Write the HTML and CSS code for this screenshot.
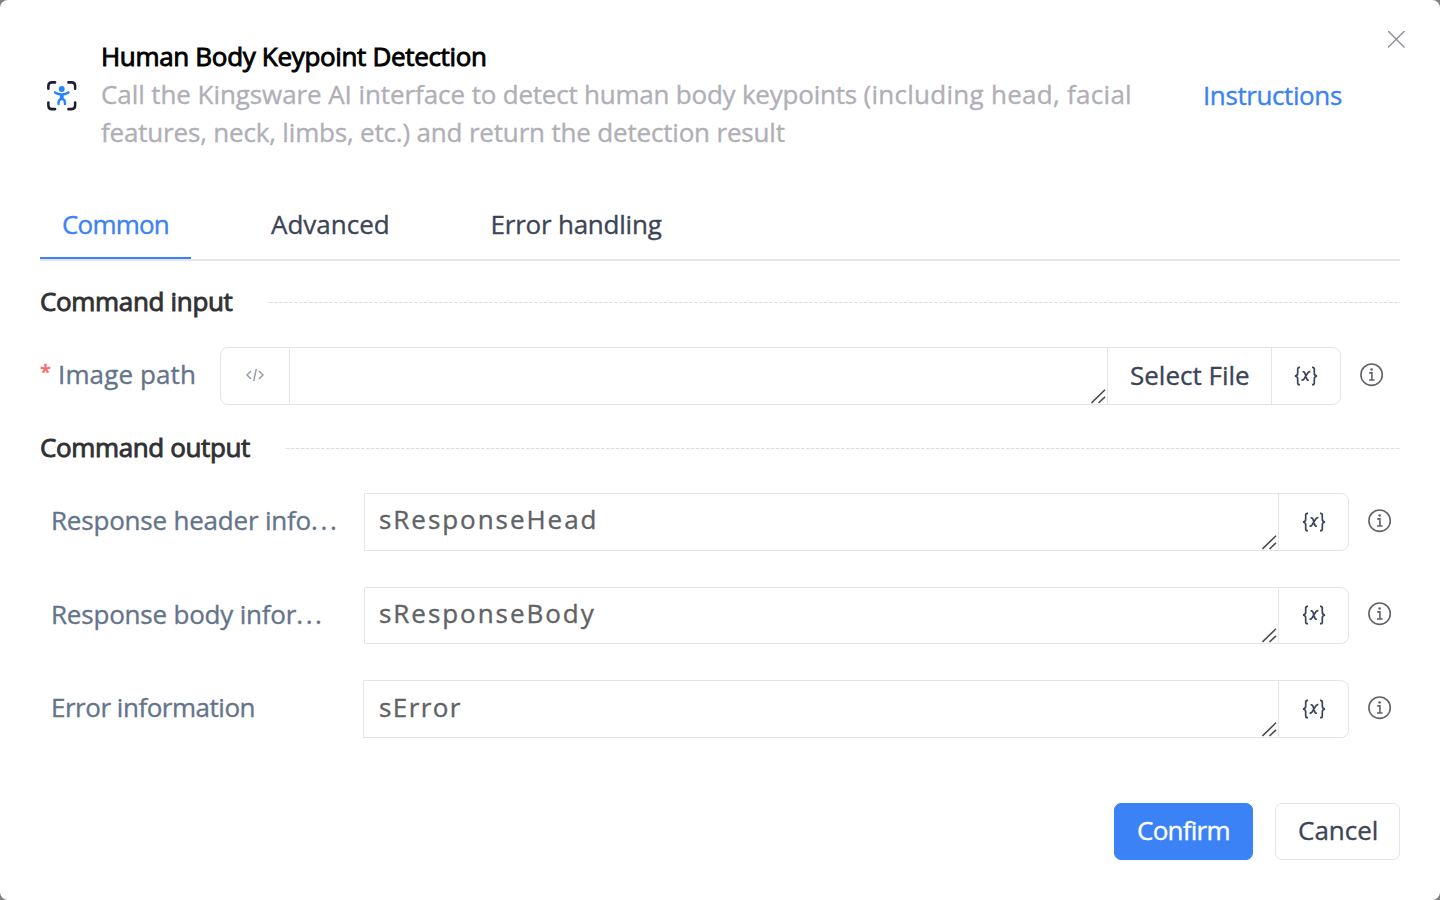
FILE: index.html
```html
<!DOCTYPE html>
<html lang="en">
<head>
<meta charset="utf-8">
<title>Human Body Keypoint Detection</title>
<link rel="stylesheet" href="styles.css">
</head>
<body>
<svg width="0" height="0" class="defs">
  <symbol id="info" viewBox="0 0 24 24"><g fill="none" stroke="#606266" stroke-width="1.6"><circle cx="11.6" cy="11.7" r="10.7"/><path d="M9.2 9.9h2.7v7M9 17h5.6"/></g><circle cx="11.6" cy="6.5" r="1.3" fill="#606266"/></symbol>
  <symbol id="var" viewBox="0 0 24 20"><g fill="none" stroke="#3b4557" stroke-width="1.7"><path d="M6 1.3H5.4Q3.7 1.3 3.7 3v4.2Q3.7 9.6 1 10q2.7.4 2.7 2.8V17q0 1.7 1.7 1.7H6"/><path d="M18 1.3h.6q1.7 0 1.7 1.7v4.2q0 2.4 2.7 2.8-2.7.4-2.7 2.8V17q0 1.7-1.7 1.7H18"/><path d="M8.6 6q1.7-.6 2.3 1l1.9 6q.5 1.5 2 .9M16.4 5.7q-1.5-.3-2.5 1.1L10 12.9q-1 1.4-2.5 1.1"/></g></symbol>
  <symbol id="grip" viewBox="0 0 15 15"><path d="M.5 14 14 .8M7.5 14 14 7.8" fill="none" stroke="#4c4c4c" stroke-width="1.6"/></symbol>
</svg>
<main class="dialog">
  <header class="header">
    <svg class="logo" viewBox="0 0 30 30"><g fill="none" stroke="#1f1f33" stroke-width="2.6" stroke-linecap="round"><path d="M1.4 7.8V5q0-3.6 3.6-3.6h3.2M21.8 1.4H25q3.6 0 3.6 3.6v2.8M28.6 21.8V25q0 3.6-3.6 3.6h-3.2M8.2 28.6H5q-3.6 0-3.6-3.6v-3.2"/></g><circle cx="15" cy="8.2" r="3" fill="#2b84ff"/><g fill="none" stroke="#2b84ff" stroke-width="2.5" stroke-linecap="round" stroke-linejoin="round"><path d="M8.2 11.6q3 2 6.8 2t6.8-2M15 14v3.8M11.7 23.4q-.2-5.2 3.3-5.2t3.3 5.2"/></g><path d="M13 13.6h4v5h-4z" fill="#2b84ff"/></svg>
    <div class="heading">
      <h1 class="title">Human Body Keypoint Detection</h1>
      <p class="desc"><span class="desc-a">Call the Kingsware AI interface </span><span class="desc-mid">to detect human body keypoints </span><span class="desc-end">(including head, facial</span><br><span class="desc-b">features, neck, limbs, etc.) and return the detection result</span></p>
    </div>
    <a class="link">Instructions</a>
    <svg class="close" viewBox="0 0 19 19"><path d="M.5.5l17 17M17.5.5l-17 17" stroke="#8f9299" stroke-width="1.5"/></svg>
  </header>
  <nav class="tabs">
    <div class="tab active"><span class="t-common">Common</span></div>
    <div class="tab second"><span class="t-adv">Advanced</span></div>
    <div class="tab third"><span class="t-err">Error handling</span></div>
  </nav>
  <section class="section">
    <h2 class="section-head"><span class="s-in">Command input</span><i class="rule"></i></h2>
    <div class="row input-row">
      <label class="label required"><b class="star">*</b><span class="l-path">Image path</span></label>
      <div class="field rounded">
        <div class="code"><svg width="18" height="14" viewBox="0 0 18 14"><path d="M5 3 1 7l4 4M13 3l4 4-4 4M10.3.8 7.7 13.2" fill="none" stroke="#9298a3" stroke-width="1.4"/></svg></div>
        <div class="area"><svg class="grip"><use href="#grip"/></svg></div>
        <div class="select"><span class="l-select">Select File</span></div>
        <div class="var"><svg><use href="#var"/></svg></div>
      </div>
      <svg class="info"><use href="#info"/></svg>
    </div>
  </section>
  <section class="section output">
    <h2 class="section-head"><span class="s-out">Command output</span><i class="rule"></i></h2>
    <div class="row out-row">
      <label class="label wide"><span class="l-head">Response header info<span class="dots">...</span></span></label>
      <div class="field"><div class="area"><span class="v-head">sResponseHead</span><svg class="grip"><use href="#grip"/></svg></div><div class="var"><svg><use href="#var"/></svg></div></div>
      <svg class="info"><use href="#info"/></svg>
    </div>
    <div class="row out-row body-row">
      <label class="label wide"><span class="l-body">Response body infor<span class="dots">...</span></span></label>
      <div class="field"><div class="area"><span class="v-body">sResponseBody</span><svg class="grip"><use href="#grip"/></svg></div><div class="var"><svg><use href="#var"/></svg></div></div>
      <svg class="info"><use href="#info"/></svg>
    </div>
    <div class="row out-row error-row">
      <label class="label wide"><span class="l-error">Error information</span></label>
      <div class="field"><div class="area"><span class="v-error">sError</span><svg class="grip"><use href="#grip"/></svg></div><div class="var"><svg><use href="#var"/></svg></div></div>
      <svg class="info"><use href="#info"/></svg>
    </div>
  </section>
  <footer class="footer">
    <button class="btn primary"><span class="b-ok">Confirm</span></button>
    <button class="btn"><span class="b-cancel">Cancel</span></button>
  </footer>
</main>
</body>
</html>
```
FILE: styles.css
```css
* { box-sizing: border-box; }
body { margin: 0; background: #7f7f7f; font: 26px/38px "Open Sans", "Noto Sans", sans-serif; color: #3b4557; -webkit-text-stroke: 0.35px currentColor; }
.defs { position: absolute; }
.dialog { width: 1440px; height: 900px; background: #fff; border-radius: 8px; padding: 37px 40px 40px; display: flex; flex-direction: column; overflow: hidden; white-space: nowrap; }
.header { position: relative; display: flex; height: 152px; flex: none; }
.logo { width: 29.5px; height: 29.5px; margin: 44px 24.5px 0 7px; flex: none; }
.heading { width: 1102px; }
h1, h2, p { margin: 0; font-size: 26px; font-weight: 400; }
.title { color: #000; letter-spacing: -0.33px; }
.title, .s-in, .s-out { -webkit-text-stroke: 0.9px currentColor; }
.desc { color: #b0afb7; }
.desc-a { letter-spacing: -0.08px; }
.desc-mid { letter-spacing: -0.22px; }
.desc-end { letter-spacing: 0.28px; }
.desc-b { letter-spacing: -0.18px; }
.link { color: #3b82f6; margin-top: 39px; letter-spacing: -0.4px; }
.close { position: absolute; width: 19px; height: 19px; right: -6px; top: -7px; padding: 0.5px 0 0 0.5px; }
.tabs { display: flex; height: 72px; border-bottom: 2px solid #e4e5ea; flex: none; }
.tab { padding: 16px 22px 0; height: 70px; }
.active { width: 151px; color: #3b82f6; border-bottom: 2px solid #3b82f6; }
.second { margin-left: 58px; width: 220px; }
.third { padding-left: 21.5px; }
.t-common { letter-spacing: -0.8px; }
.t-err { letter-spacing: -0.22px; }
.section { padding-top: 22px; }
.section-head { display: flex; align-items: center; height: 38px; color: #303133; }
.s-in, .s-out { margin-top: -2px; letter-spacing: -0.33px; }
.s-in { width: 229px; }
.s-out { width: 246px; letter-spacing: -0.38px; }
.rule { flex: 1; height: 1px; background: repeating-linear-gradient(90deg, #dcdde1 0 3px, #f0f0f3 3px 4px, transparent 4px 5px); }
.output { padding-top: 24px; }
.row { display: flex; align-items: center; height: 58px; }
.input-row { margin-top: 26px; }
.label { display: flex; color: #64748b; flex: none; margin-top: -4px; }
.required { width: 180px; }
.star { color: #f56c6c; font-size: 20px; font-weight: 600; line-height: 34px; width: 18px; }
.l-path { letter-spacing: 0.12px; }
.wide { width: 324px; padding-left: 11px; }
.l-head, .l-body { letter-spacing: -0.2px; }
.dots { letter-spacing: 2.6px; }
.l-error { letter-spacing: -0.48px; }
.field { display: flex; height: 100%; width: 985px; border: 1px solid #e4e5e9; border-radius: 0 8px 8px 0; }
.rounded { border-radius: 8px; width: 1121px; }
.code { width: 69px; padding-bottom: 2px; border-right: 1px solid #e4e5e9; display: flex; align-items: center; justify-content: center; flex: none; }
.area { flex: 1; position: relative; padding: 6px 14px; color: #606266; }
.grip { position: absolute; width: 15px; height: 15px; right: 1px; bottom: 0; }
.select { border-left: 1px solid #e4e5e9; width: 164px; padding: 8px 0 0 22px; }
.var { width: 70px; padding: 0 0 1px; border-left: 1px solid #e4e5e9; display: flex; align-items: center; justify-content: center; flex: none; }
.rounded .var { width: 69px; }
.var svg { width: 24px; height: 20px; }
.info { width: 24px; height: 24px; margin: -2px 0 0 19px; }
.out-row { margin-top: 26px; }
.body-row { margin-top: 36px; height: 57px; }
.body-row .label { margin-top: -3px; }
.body-row .info { margin-top: -3px; }
.error-row { margin-top: 36px; }
.error-row .label { width: 323px; }
.error-row .field { width: 986px; }
.error-row .area { padding: 7px 15px; }
.v-head, .v-body { letter-spacing: 1.95px; }
.v-error { letter-spacing: 1.4px; }
.footer { display: flex; justify-content: flex-end; gap: 22px; margin-top: 65px; }
.btn { width: 125px; height: 57px; border: 1px solid #e4e5e9; border-radius: 7px; background: #fff; font: inherit; color: inherit; padding: 0 0 3px 22px; text-align: left; }
.primary { width: 139px; background: #3b82f6; border-color: #3b82f6; color: #fff; }
.b-ok { letter-spacing: -0.75px; }
```
